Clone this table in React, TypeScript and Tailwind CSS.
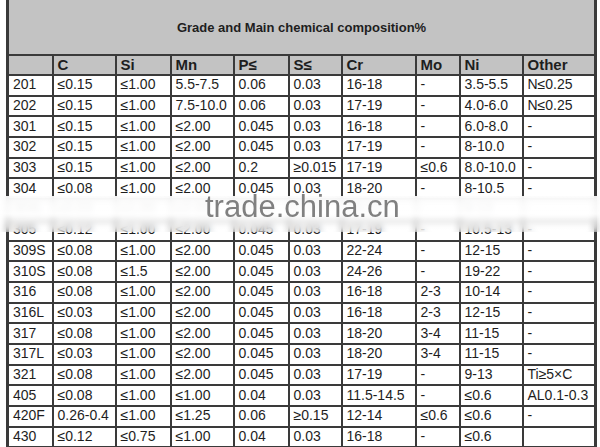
import React from 'react';

const widths = [45, 63, 55, 63, 55, 53, 74, 44, 63, 73];

const headers = ['', 'C', 'Si', 'Mn', 'P≤', 'S≤', 'Cr', 'Mo', 'Ni', 'Other'];

const rows: string[][] = [
  ['201', '≤0.15', '≤1.00', '5.5-7.5', '0.06', '0.03', '16-18', '-', '3.5-5.5', 'N≤0.25'],
  ['202', '≤0.15', '≤1.00', '7.5-10.0', '0.06', '0.03', '17-19', '-', '4.0-6.0', 'N≤0.25'],
  ['301', '≤0.15', '≤1.00', '≤2.00', '0.045', '0.03', '16-18', '-', '6.0-8.0', '-'],
  ['302', '≤0.15', '≤1.00', '≤2.00', '0.045', '0.03', '17-19', '-', '8-10.0', '-'],
  ['303', '≤0.15', '≤1.00', '≤2.00', '0.2', '≥0.015', '17-19', '≤0.6', '8.0-10.0', '-'],
  ['304', '≤0.08', '≤1.00', '≤2.00', '0.045', '0.03', '18-20', '-', '8-10.5', '-'],
  ['304L', '≤0.03', '≤1.00', '≤2.00', '0.045', '0.03', '18-20', '-', '9-13', '-'],
  ['305', '≤0.12', '≤1.00', '≤2.00', '0.045', '0.03', '17-19', '-', '10.5-13', '-'],
  ['309S', '≤0.08', '≤1.00', '≤2.00', '0.045', '0.03', '22-24', '-', '12-15', '-'],
  ['310S', '≤0.08', '≤1.5', '≤2.00', '0.045', '0.03', '24-26', '-', '19-22', '-'],
  ['316', '≤0.08', '≤1.00', '≤2.00', '0.045', '0.03', '16-18', '2-3', '10-14', '-'],
  ['316L', '≤0.03', '≤1.00', '≤2.00', '0.045', '0.03', '16-18', '2-3', '12-15', '-'],
  ['317', '≤0.08', '≤1.00', '≤2.00', '0.045', '0.03', '18-20', '3-4', '11-15', '-'],
  ['317L', '≤0.03', '≤1.00', '≤2.00', '0.045', '0.03', '18-20', '3-4', '11-15', '-'],
  ['321', '≤0.08', '≤1.00', '≤2.00', '0.045', '0.03', '17-19', '-', '9-13', 'Ti≥5×C'],
  ['405', '≤0.08', '≤1.00', '≤1.00', '0.04', '0.03', '11.5-14.5', '-', '≤0.6', 'AL0.1-0.3'],
  ['420F', '0.26-0.4', '≤1.00', '≤1.25', '0.06', '≥0.15', '12-14', '≤0.6', '≤0.6', '-'],
  ['430', '≤0.12', '≤0.75', '≤1.00', '0.04', '0.03', '16-18', '-', '≤0.6', ''],
];

export default function App() {
  return (
    <div className="relative w-[600px] h-[447px] overflow-hidden bg-white font-['Liberation_Sans',Arial,sans-serif] text-[#1e1e1e]">
      <table className="ml-[6px] mt-[-4px] table-fixed border-collapse border-[3px] border-[#3a3a3a] w-[590px]">
        <colgroup>
          {widths.map((w, i) => (
            <col key={i} style={{ width: w }} />
          ))}
        </colgroup>
        <tbody>
          <tr className="h-[57px] bg-[#c3c3c3]">
            <td colSpan={10} className="border-2 border-[#3a3a3a] text-center align-middle pt-[2px] text-[13px] font-bold">
              Grade and Main chemical composition%
            </td>
          </tr>
          <tr className="h-[20.5px] bg-[#c3c3c3]">
            {headers.map((h, i) => (
              <td key={i} className="border-2 border-[#3a3a3a] px-[4px] py-0 text-[15px] font-bold leading-none">
                {h}
              </td>
            ))}
          </tr>
          {rows.map((r) => (
            <tr key={r[0]} className="h-[20.7px]">
              {r.map((c, i) => (
                <td key={i} className="border-2 border-[#3a3a3a] px-[4px] pt-0 pb-[2px] text-[14px] leading-none whitespace-nowrap">
                  {c}
                </td>
              ))}
            </tr>
          ))}
        </tbody>
      </table>

      {/* watermark band */}
      <div className="absolute left-0 top-[196px] w-[600px] h-[36px] backdrop-blur-[3px] bg-gradient-to-b from-white/90 via-white/95 to-white/30" />
      <div className="absolute left-[205px] top-[191px] text-[31px] leading-none text-[#808080] font-['Liberation_Sans',Arial,sans-serif]">
        trade.china.cn
      </div>
    </div>
  );
}
